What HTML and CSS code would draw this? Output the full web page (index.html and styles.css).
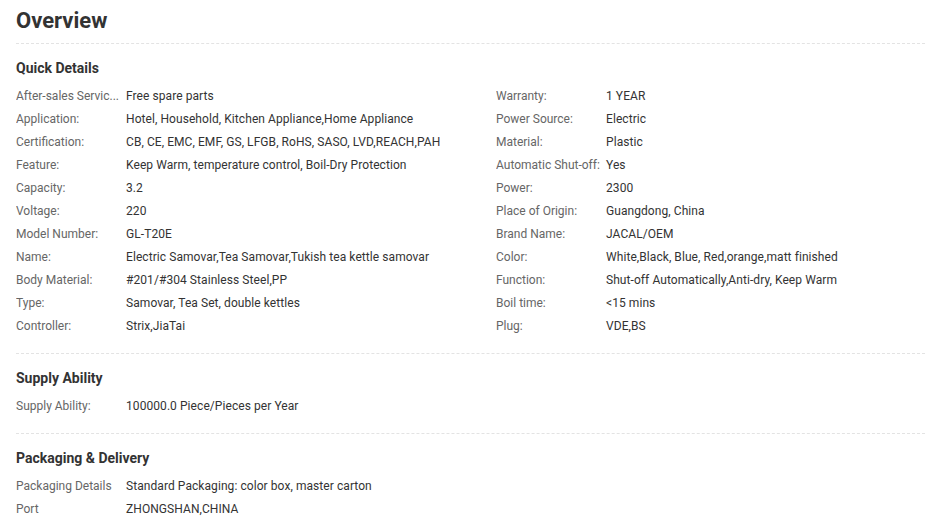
FILE: index.html
```html
<!DOCTYPE html>
<html>
<head>
<meta charset="utf-8">
<link rel="stylesheet" href="styles.css">
</head>
<body>
<div class="overview">
  <h1 class="title">Overview</h1>
  <section class="block">
    <h2 class="block-title">Quick Details</h2>
    <div class="grid two">
      <div class="row"><span class="label">After-sales Servic...</span><span class="value">Free spare parts</span></div>
      <div class="row"><span class="label">Warranty:</span><span class="value">1 YEAR</span></div>
      <div class="row"><span class="label">Application:</span><span class="value">Hotel, Household, Kitchen Appliance,Home Appliance</span></div>
      <div class="row"><span class="label">Power Source:</span><span class="value">Electric</span></div>
      <div class="row"><span class="label">Certification:</span><span class="value">CB, CE, EMC, EMF, GS, LFGB, RoHS, SASO, LVD,REACH,PAH</span></div>
      <div class="row"><span class="label">Material:</span><span class="value">Plastic</span></div>
      <div class="row"><span class="label">Feature:</span><span class="value">Keep Warm, temperature control, Boil-Dry Protection</span></div>
      <div class="row"><span class="label">Automatic Shut-off:</span><span class="value">Yes</span></div>
      <div class="row"><span class="label">Capacity:</span><span class="value">3.2</span></div>
      <div class="row"><span class="label">Power:</span><span class="value">2300</span></div>
      <div class="row"><span class="label">Voltage:</span><span class="value">220</span></div>
      <div class="row"><span class="label">Place of Origin:</span><span class="value">Guangdong, China</span></div>
      <div class="row"><span class="label">Model Number:</span><span class="value">GL-T20E</span></div>
      <div class="row"><span class="label">Brand Name:</span><span class="value">JACAL/OEM</span></div>
      <div class="row"><span class="label">Name:</span><span class="value">Electric Samovar,Tea Samovar,Tukish tea kettle samovar</span></div>
      <div class="row"><span class="label">Color:</span><span class="value">White,Black, Blue, Red,orange,matt finished</span></div>
      <div class="row"><span class="label">Body Material:</span><span class="value">#201/#304 Stainless Steel,PP</span></div>
      <div class="row"><span class="label">Function:</span><span class="value">Shut-off Automatically,Anti-dry, Keep Warm</span></div>
      <div class="row"><span class="label">Type:</span><span class="value">Samovar, Tea Set, double kettles</span></div>
      <div class="row"><span class="label">Boil time:</span><span class="value">&lt;15 mins</span></div>
      <div class="row"><span class="label">Controller:</span><span class="value">Strix,JiaTai</span></div>
      <div class="row"><span class="label">Plug:</span><span class="value">VDE,BS</span></div>
    </div>
  </section>
  <section class="block">
    <h2 class="block-title">Supply Ability</h2>
    <div class="grid">
      <div class="row"><span class="label">Supply Ability:</span><span class="value">100000.0 Piece/Pieces per Year</span></div>
    </div>
  </section>
  <section class="block last">
    <h2 class="block-title">Packaging &amp; Delivery</h2>
    <div class="grid">
      <div class="row"><span class="label">Packaging Details</span><span class="value">Standard Packaging: color box, master carton</span></div>
      <div class="row"><span class="label">Port</span><span class="value">ZHONGSHAN,CHINA</span></div>
    </div>
  </section>
</div>
</body>
</html>
```

FILE: styles.css
```css
html, body {
  margin: 0;
  padding: 0;
  background: #fff;
  overflow: hidden;
}
body {
  font-family: Roboto, "Liberation Sans", sans-serif;
  color: #333;
}
.overview {
  padding-left: 16px;
}
.title {
  margin: 0;
  padding: 8px 0 9px;
  font-size: 22px;
  line-height: 26px;
  font-weight: 700;
  color: #333;
  border-bottom: 1px dashed #e3e3e3;
}
.block {
  padding: 15px 0 15px;
  border-bottom: 1px dashed #e3e3e3;
}
.block.last {
  border-bottom: none;
}
.block-title {
  margin: 0 0 8px;
  font-size: 14px;
  line-height: 18px;
  font-weight: 700;
  color: #333;
}
.grid {
  display: grid;
  grid-template-columns: 480px;
}
.grid.two {
  grid-template-columns: 480px minmax(0, 1fr);
}
.row {
  display: flex;
  min-width: 0;
  font-size: 12px;
  line-height: 23px;
  white-space: nowrap;
}
.label {
  width: 110px;
  flex: none;
  color: #666;
  overflow: hidden;
}
.value {
  color: #333;
  letter-spacing: 0.07px;
}
```
